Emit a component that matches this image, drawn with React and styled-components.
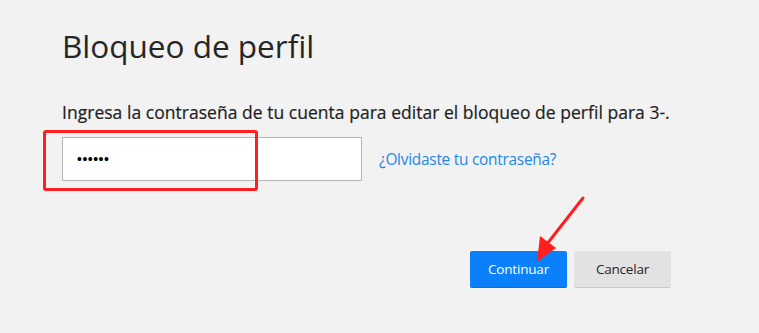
import React from "react";
import styled, { createGlobalStyle } from "styled-components";

const Global = createGlobalStyle`
  html, body { margin: 0; padding: 0; background: #f2f2f2; }
  body { font-family: "Open Sans", "Noto Sans", sans-serif; color: #262626; }
`;

const Page = styled.div`
  position: relative;
  width: 759px;
  height: 333px;
  box-sizing: border-box;
  padding: 24px 0 0 62px;
  display: flex;
  flex-direction: column;
`;

const Title = styled.h1`
  margin: 0;
  font-size: 31.5px;
  font-weight: 400;
  line-height: 44px;
  color: #262626;
`;

const Prompt = styled.p`
  margin: 33px 0 0;
  font-size: 17.5px;
  font-weight: 400;
  line-height: 22px;
  letter-spacing: 0.03px;
  color: #1e1e1e;
  white-space: nowrap;
  -webkit-text-stroke: 0.2px #1e1e1e;
`;

const Row = styled.div`
  display: flex;
  align-items: center;
  gap: 17px;
  margin-top: 14px;
`;

const Input = styled.input`
  box-sizing: border-box;
  width: 300px;
  height: 44px;
  border: 1px solid #b5b5b5;
  background: #fff;
  padding: 0 14px;
  font-size: 14px;
  letter-spacing: 0.5px;
  color: #000;
  outline: none;
  font-family: "Liberation Sans", sans-serif;
`;

const Link = styled.a`
  color: #1f86e8;
  font-size: 15.4px;
  letter-spacing: -0.25px;
  text-decoration: none;
`;

const Actions = styled.div`
  display: flex;
  justify-content: flex-end;
  gap: 7px;
  margin-top: 70px;
  padding-right: 88px;
`;

const Button = styled.button`
  box-sizing: border-box;
  width: 97px;
  height: 37px;
  border: none;
  border-radius: 2px;
  font-family: "Open Sans", "Noto Sans", sans-serif;
  font-size: 13.5px;
  letter-spacing: -0.2px;
  background: ${(p) => (p.$primary ? "#0a80fb" : "#e2e2e2")};
  color: ${(p) => (p.$primary ? "#fff" : "#262626")};
  border-bottom: 1px solid ${(p) => (p.$primary ? "#0a6fd8" : "#c8c8c8")};
`;

const Highlight = styled.div`
  position: absolute;
  left: 43px;
  top: 130px;
  width: 209px;
  height: 55px;
  border: 3px solid #ff1f1f;
  border-radius: 3px;
  pointer-events: none;
`;

const Arrow = styled.svg`
  position: absolute;
  left: 530px;
  top: 194px;
  pointer-events: none;
`;

export default function App() {
  return (
    <>
      <Global />
      <Page>
        <Title>Bloqueo de perfil</Title>
        <Prompt>Ingresa la contraseña de tu cuenta para editar el bloqueo de perfil para 3-.</Prompt>
        <Row>
          <Input type="password" defaultValue="123456" readOnly />
          <Link href="#">¿Olvidaste tu contraseña?</Link>
        </Row>
        <Actions>
          <Button $primary>Continuar</Button>
          <Button>Cancelar</Button>
        </Actions>
        <Highlight />
        <Arrow width="60" height="72" viewBox="0 0 60 72">
          <path d="M53 4 L17 50" stroke="#ff1f1f" strokeWidth="3" strokeLinecap="round" />
          <polygon points="7,68 10,42 26,54" fill="#ff1f1f" />
        </Arrow>
      </Page>
    </>
  );
}
